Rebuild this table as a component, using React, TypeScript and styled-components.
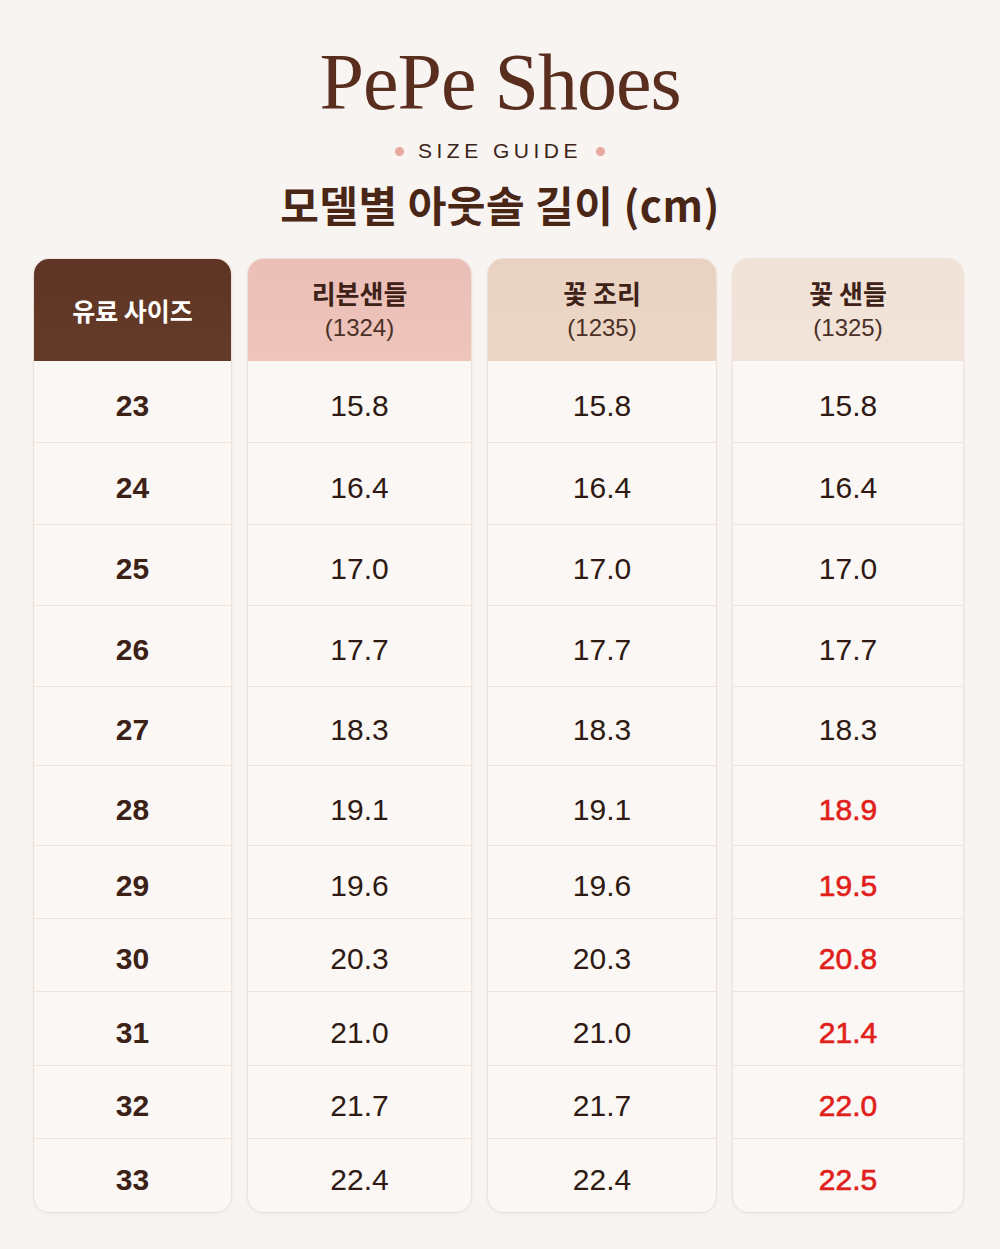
import * as React from "react";
import styled, { createGlobalStyle } from "styled-components";

const GlobalStyle = createGlobalStyle`
  html, body {
    margin: 0;
    padding: 0;
    background: #f8f4f1;
  }
  * { box-sizing: border-box; }
`;

const row_heights = [82, 82, 81, 81, 79, 80, 73, 73, 74, 73, 73];
const sizes = ["23", "24", "25", "26", "27", "28", "29", "30", "31", "32", "33"];

type Column = {
  name: string;
  code: string;
  width: number;
  bg: string;
  values: string[];
  red_from?: number;
};

const columns: Column[] = [
  {
    name: "리본샌들",
    code: "(1324)",
    width: 225,
    bg: "linear-gradient(180deg, #ebbfb7 0%, #eec4bb 100%)",
    values: ["15.8", "16.4", "17.0", "17.7", "18.3", "19.1", "19.6", "20.3", "21.0", "21.7", "22.4"],
  },
  {
    name: "꽃 조리",
    code: "(1235)",
    width: 230,
    bg: "linear-gradient(180deg, #e9d2c1 0%, #ecd6c6 100%)",
    values: ["15.8", "16.4", "17.0", "17.7", "18.3", "19.1", "19.6", "20.3", "21.0", "21.7", "22.4"],
  },
  {
    name: "꽃 샌들",
    code: "(1325)",
    width: 232,
    bg: "linear-gradient(180deg, #f1e2d6 0%, #f2e4d9 100%)",
    values: ["15.8", "16.4", "17.0", "17.7", "18.3", "18.9", "19.5", "20.8", "21.4", "22.0", "22.5"],
    red_from: 5,
  },
];

const Page = styled.div`
  width: 1000px;
  min-height: 1249px;
  padding-top: 38px;
  background: #f8f4f1;
  font-family: "Liberation Sans", Arial, sans-serif;
`;

const Heading = styled.header`
  display: flex;
  flex-direction: column;
  align-items: center;
`;

const Brand = styled.h1`
  margin: 0;
  font-family: "Liberation Serif", "Times New Roman", serif;
  font-weight: 400;
  font-size: 80px;
  line-height: 88px;
  letter-spacing: -1px;
  color: #5a2e1e;
`;

const Tagline = styled.div`
  margin-top: 13px;
  display: flex;
  align-items: center;
  gap: 14px;
  font-family: "Liberation Sans", Arial, sans-serif;
  font-size: 21px;
  letter-spacing: 4.5px;
  color: #3a2318;
  line-height: 24px;
`;

const Dot = styled.span`
  width: 9px;
  height: 9px;
  border-radius: 50%;
  background: #e6a89f;
`;

const Subtitle = styled.h2`
  margin: 12px 0 0;
  font-family: "Noto Sans CJK KR", "Noto Sans", sans-serif;
  font-weight: 700;
  font-size: 42px;
  line-height: 58px;
  letter-spacing: 0.5px;
  color: #4a2617;
`;

const Table = styled.div`
  margin: 25px 0 0 33px;
  display: flex;
  gap: 15px;
  align-items: flex-start;
`;

const Card = styled.div<{ $width: number }>`
  width: ${(p) => p.$width}px;
  border: 1px solid #eee1d7;
  border-radius: 16px;
  background: #faf7f4;
  overflow: hidden;
  box-shadow: 0 1px 3px rgba(120, 80, 50, 0.06);
`;

const Head = styled.div<{ $bg: string }>`
  height: 102px;
  background: ${(p) => p.$bg};
  display: flex;
  flex-direction: column;
  align-items: center;
  justify-content: center;
`;

const HeadTitle = styled.div<{ $light?: boolean }>`
  font-family: "Noto Sans CJK KR", "Noto Sans", sans-serif;
  font-weight: 700;
  font-size: ${(p) => (p.$light ? "25px" : "26px")};
  line-height: 36px;
  color: ${(p) => (p.$light ? "#ffffff" : "#3e2218")};
`;

const HeadCode = styled.div`
  font-family: "Liberation Sans", Arial, sans-serif;
  font-size: 24px;
  line-height: 34px;
  color: #4a3026;
`;

const Cell = styled.div<{ $h: number; $last: boolean }>`
  height: ${(p) => p.$h}px;
  padding-top: 8px;
  border-bottom: ${(p) => (p.$last ? "none" : "1px solid #efe3da")};
  display: flex;
  align-items: center;
  justify-content: center;
`;

const SizeText = styled.span`
  font-family: "Liberation Sans", Arial, sans-serif;
  font-weight: 700;
  font-size: 30px;
  color: #3c2116;
`;

const ValueText = styled.span<{ $red: boolean }>`
  font-family: "Liberation Sans", Arial, sans-serif;
  font-weight: ${(p) => (p.$red ? 500 : 400)};
  font-size: 30px;
  color: ${(p) => (p.$red ? "#e1201b" : "#2e1a12")};
  -webkit-text-stroke: ${(p) => (p.$red ? "0.6px #e1201b" : "0")};
`;

const App = () => {
  return (
    <Page>
      <GlobalStyle />
      <Heading>
        <Brand>PePe Shoes</Brand>
        <Tagline>
          <Dot />
          SIZE GUIDE
          <Dot />
        </Tagline>
        <Subtitle>모델별 아웃솔 길이 (cm)</Subtitle>
      </Heading>
      <Table>
        <Card $width={199}>
          <Head $bg="linear-gradient(180deg, #5e3424 0%, #643a28 100%)">
            <HeadTitle $light>유료 사이즈</HeadTitle>
          </Head>
          {sizes.map((s, i) => (
            <Cell key={s} $h={row_heights[i]} $last={i === sizes.length - 1}>
              <SizeText>{s}</SizeText>
            </Cell>
          ))}
        </Card>
        {columns.map((col) => (
          <Card key={col.code} $width={col.width}>
            <Head $bg={col.bg}>
              <HeadTitle>{col.name}</HeadTitle>
              <HeadCode>{col.code}</HeadCode>
            </Head>
            {col.values.map((v, i) => (
              <Cell key={i} $h={row_heights[i]} $last={i === col.values.length - 1}>
                <ValueText $red={col.red_from !== undefined && i >= col.red_from}>{v}</ValueText>
              </Cell>
            ))}
          </Card>
        ))}
      </Table>
    </Page>
  );
};

export default App;
